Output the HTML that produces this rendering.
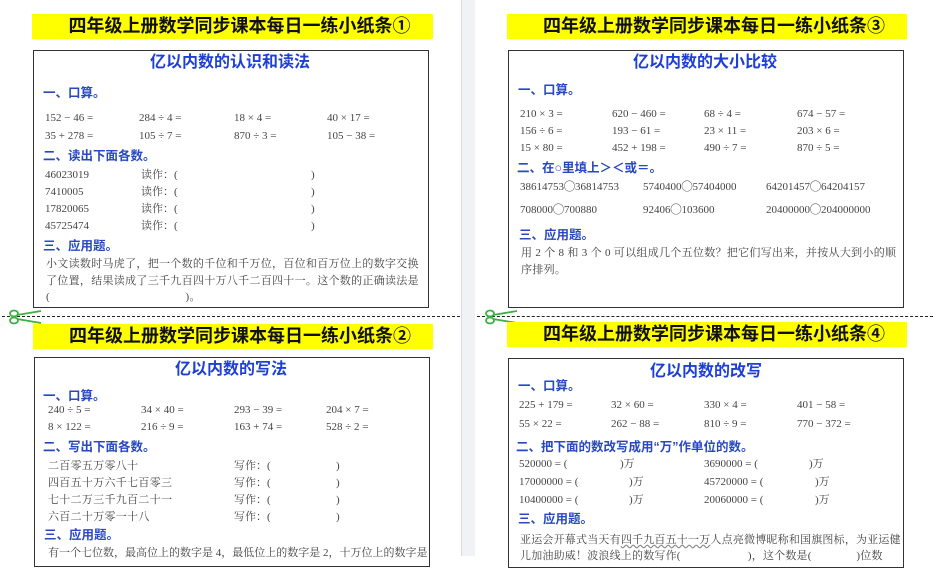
<!DOCTYPE html>
<html><head><meta charset="utf-8"><style>
*{margin:0;padding:0;box-sizing:border-box}
body{width:933px;height:556px;background:#fff;position:relative;overflow:hidden;font-family:"Liberation Serif","Noto Serif CJK SC",serif;color:#444}
.a{position:absolute;white-space:nowrap;line-height:1}
.ban{position:absolute;background:#ffff00;height:25px;font:bold 18px "Liberation Sans","Noto Sans CJK SC",sans-serif;color:#111;text-align:center;line-height:25px;padding-left:14px}
.box{position:absolute;border:1.5px solid #333;background:#fff}
.t{position:absolute;font:bold 16px "Liberation Sans","Noto Sans CJK SC",sans-serif;color:#1d3fd6;line-height:1;white-space:nowrap}
.h{position:absolute;font:bold 12.5px "Liberation Sans","Noto Sans CJK SC",sans-serif;color:#2848c0;line-height:1;white-space:nowrap}
.n{position:absolute;font-size:11px;line-height:1;white-space:nowrap;color:#444}
.p{position:absolute;font-size:11px;line-height:1;white-space:nowrap;color:#444;letter-spacing:0.3px}
.dash{position:absolute;height:0;border-top:1.3px dashed #222}
</style></head><body>
<div style="position:absolute;left:461px;top:0;width:14px;height:556px;background:#f1f2f5;border-left:1px solid #dcdde2"></div>

<!-- panel 1 -->
<div class="ban" style="left:32px;top:14px;width:401px">四年级上册数学同步课本每日一练小纸条①</div>
<div class="box" style="left:33px;top:50px;width:396px;height:258px"></div>
<div class="t" style="left:150px;top:55px">亿以内数的认识和读法</div>
<div class="h" style="left:43px;top:87px">一、口算。</div>
<div class="n" style="left:45px;top:113px">152 − 46 =</div><div class="n" style="left:139px;top:113px">284 ÷ 4 =</div><div class="n" style="left:234px;top:113px">18 × 4 =</div><div class="n" style="left:327px;top:113px">40 × 17 =</div>
<div class="n" style="left:45px;top:131px">35 + 278 =</div><div class="n" style="left:139px;top:131px">105 ÷ 7 =</div><div class="n" style="left:234px;top:131px">870 ÷ 3 =</div><div class="n" style="left:327px;top:131px">105 − 38 =</div>
<div class="h" style="left:43px;top:150px">二、读出下面各数。</div>
<div class="n" style="left:45px;top:170px">46023019</div><div class="n" style="left:141px;top:170px">读作：(</div><div class="n" style="left:311px;top:170px">)</div>
<div class="n" style="left:45px;top:187px">7410005</div><div class="n" style="left:141px;top:187px">读作：(</div><div class="n" style="left:311px;top:187px">)</div>
<div class="n" style="left:45px;top:204px">17820065</div><div class="n" style="left:141px;top:204px">读作：(</div><div class="n" style="left:311px;top:204px">)</div>
<div class="n" style="left:45px;top:221px">45725474</div><div class="n" style="left:141px;top:221px">读作：(</div><div class="n" style="left:311px;top:221px">)</div>
<div class="h" style="left:43px;top:240px">三、应用题。</div>
<div class="p" style="left:46px;top:259px">小文读数时马虎了，把一个数的千位和千万位，百位和百万位上的数字交换</div>
<div class="p" style="left:46px;top:276px">了位置，结果读成了三千九百四十万八千二百四十一。这个数的正确读法是</div>
<div class="p" style="left:46px;top:292px">(　　　　　　　　　　　　)。</div>

<!-- panel 3 -->
<div class="ban" style="left:507px;top:14px;width:400px">四年级上册数学同步课本每日一练小纸条③</div>
<div class="box" style="left:508px;top:50px;width:396px;height:258px"></div>
<div class="t" style="left:633px;top:55px">亿以内数的大小比较</div>
<div class="h" style="left:518px;top:84px">一、口算。</div>
<div class="n" style="left:520px;top:109px">210 × 3 =</div><div class="n" style="left:612px;top:109px">620 − 460 =</div><div class="n" style="left:704px;top:109px">68 ÷ 4 =</div><div class="n" style="left:797px;top:109px">674 − 57 =</div>
<div class="n" style="left:520px;top:126px">156 ÷ 6 =</div><div class="n" style="left:612px;top:126px">193 − 61 =</div><div class="n" style="left:704px;top:126px">23 × 11 =</div><div class="n" style="left:797px;top:126px">203 × 6 =</div>
<div class="n" style="left:520px;top:143px">15 × 80 =</div><div class="n" style="left:612px;top:143px">452 + 198 =</div><div class="n" style="left:704px;top:143px">490 ÷ 7 =</div><div class="n" style="left:797px;top:143px">870 ÷ 5 =</div>
<div class="h" style="left:517px;top:162px">二、在○里填上＞＜或＝。</div>
<div class="n" style="left:520px;top:182px">38614753◯36814753</div><div class="n" style="left:643px;top:182px">5740400◯57404000</div><div class="n" style="left:766px;top:182px">64201457◯64204157</div>
<div class="n" style="left:520px;top:205px">708000◯700880</div><div class="n" style="left:643px;top:205px">92406◯103600</div><div class="n" style="left:766px;top:205px">20400000◯204000000</div>
<div class="h" style="left:519px;top:229px">三、应用题。</div>
<div class="p" style="left:521px;top:248px">用 2 个 8 和 3 个 0 可以组成几个五位数？把它们写出来，并按从大到小的顺</div>
<div class="p" style="left:521px;top:265px">序排列。</div>

<!-- cut lines -->
<div class="dash" style="left:2px;top:316px;width:458px"></div>
<div class="dash" style="left:477px;top:316px;width:456px"></div>
<svg class="a" style="left:8px;top:309px" width="34" height="16" viewBox="0 0 34 16"><g fill="none" stroke="#3cb043" stroke-width="1.8"><ellipse cx="6" cy="4.5" rx="4" ry="3"/><ellipse cx="6" cy="11.5" rx="4" ry="3"/><path d="M9 6 L33 2 M9 10 L33 14"/></g></svg>
<svg class="a" style="left:484px;top:309px" width="34" height="16" viewBox="0 0 34 16"><g fill="none" stroke="#3cb043" stroke-width="1.8"><ellipse cx="6" cy="4.5" rx="4" ry="3"/><ellipse cx="6" cy="11.5" rx="4" ry="3"/><path d="M9 6 L33 2 M9 10 L33 14"/></g></svg>

<!-- panel 2 -->
<div class="ban" style="left:33px;top:324px;width:400px">四年级上册数学同步课本每日一练小纸条②</div>
<div class="box" style="left:34px;top:357px;width:396px;height:210px"></div>
<div class="t" style="left:175px;top:362px">亿以内数的写法</div>
<div class="h" style="left:43px;top:390px">一、口算。</div>
<div class="n" style="left:48px;top:405px">240 ÷ 5 =</div><div class="n" style="left:141px;top:405px">34 × 40 =</div><div class="n" style="left:234px;top:405px">293 − 39 =</div><div class="n" style="left:326px;top:405px">204 × 7 =</div>
<div class="n" style="left:48px;top:422px">8 × 122 =</div><div class="n" style="left:141px;top:422px">216 ÷ 9 =</div><div class="n" style="left:234px;top:422px">163 + 74 =</div><div class="n" style="left:326px;top:422px">528 ÷ 2 =</div>
<div class="h" style="left:43px;top:441px">二、写出下面各数。</div>
<div class="p" style="left:48px;top:461px">二百零五万零八十</div><div class="n" style="left:234px;top:461px">写作：(</div><div class="n" style="left:336px;top:461px">)</div>
<div class="p" style="left:48px;top:478px">四百五十万六千七百零三</div><div class="n" style="left:234px;top:478px">写作：(</div><div class="n" style="left:336px;top:478px">)</div>
<div class="p" style="left:48px;top:495px">七十二万三千九百二十一</div><div class="n" style="left:234px;top:495px">写作：(</div><div class="n" style="left:336px;top:495px">)</div>
<div class="p" style="left:48px;top:512px">六百二十万零一十八</div><div class="n" style="left:234px;top:512px">写作：(</div><div class="n" style="left:336px;top:512px">)</div>
<div class="h" style="left:44px;top:529px">三、应用题。</div>
<div class="p" style="left:48px;top:548px;letter-spacing:0">有一个七位数，最高位上的数字是 4，最低位上的数字是 2，十万位上的数字是</div>

<!-- panel 4 -->
<div class="ban" style="left:507px;top:322px;width:400px">四年级上册数学同步课本每日一练小纸条④</div>
<div class="box" style="left:508px;top:358px;width:396px;height:210px"></div>
<div class="t" style="left:650px;top:364px">亿以内数的改写</div>
<div class="h" style="left:518px;top:380px">一、口算。</div>
<div class="n" style="left:519px;top:400px">225 + 179 =</div><div class="n" style="left:611px;top:400px">32 × 60 =</div><div class="n" style="left:704px;top:400px">330 × 4 =</div><div class="n" style="left:797px;top:400px">401 − 58 =</div>
<div class="n" style="left:519px;top:419px">55 × 22 =</div><div class="n" style="left:611px;top:419px">262 − 88 =</div><div class="n" style="left:704px;top:419px">810 ÷ 9 =</div><div class="n" style="left:797px;top:419px">770 − 372 =</div>
<div class="h" style="left:516px;top:441px">二、把下面的数改写成用“万”作单位的数。</div>
<div class="n" style="left:519px;top:459px">520000 = (</div><div class="n" style="left:620px;top:459px">)万</div><div class="n" style="left:704px;top:459px">3690000 = (</div><div class="n" style="left:809px;top:459px">)万</div>
<div class="n" style="left:519px;top:477px">17000000 = (</div><div class="n" style="left:629px;top:477px">)万</div><div class="n" style="left:704px;top:477px">45720000 = (</div><div class="n" style="left:815px;top:477px">)万</div>
<div class="n" style="left:519px;top:495px">10400000 = (</div><div class="n" style="left:629px;top:495px">)万</div><div class="n" style="left:704px;top:495px">20060000 = (</div><div class="n" style="left:815px;top:495px">)万</div>
<div class="h" style="left:518px;top:513px">三、应用题。</div>
<div class="p" style="left:520px;top:535px;letter-spacing:0.2px">亚运会开幕式当天有<u style="text-decoration-style:wavy;text-decoration-color:#888">四千九百五十一万</u>人点亮微博昵称和国旗图标，为亚运健</div>
<div class="p" style="left:520px;top:551px;letter-spacing:0.2px">儿加油助威！波浪线上的数写作(　　　　　　)，这个数是(　　　　)位数</div>
</body></html>
